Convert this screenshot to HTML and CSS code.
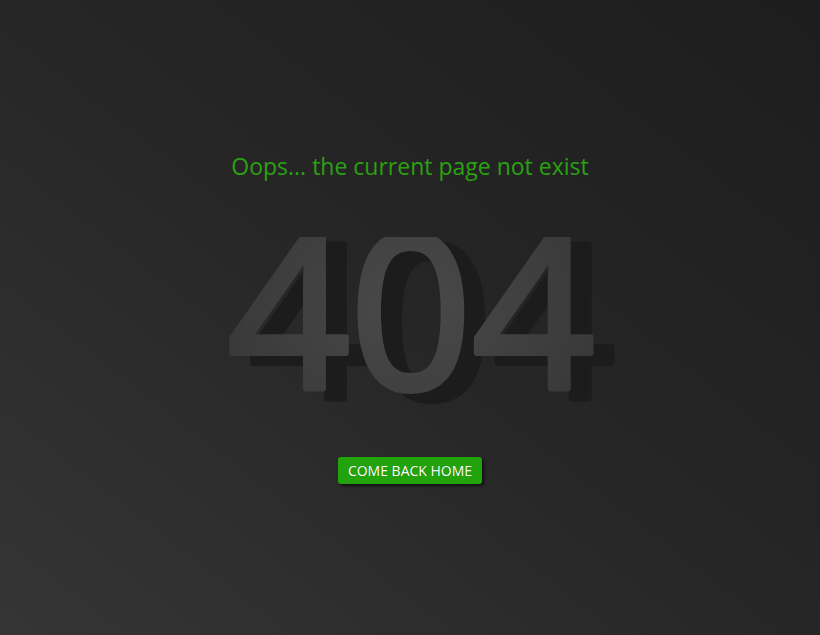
FILE: index.html
```html
<!DOCTYPE html>
<html lang="en">
<head>
<meta charset="utf-8">
<title>404</title>
<link rel="stylesheet" href="styles.css">
</head>
<body>
<main class="page">
  <h1 class="message">Oops... the current page not exist</h1>
  <div class="code">
    <svg class="code-svg" width="460" height="200" viewBox="0 0 460 200">
      <defs>
        <radialGradient id="g" cx="0.5" cy="0.5" r="0.55">
          <stop offset="0" stop-color="#4b4a4a"/>
          <stop offset="1" stop-color="#393838"/>
        </radialGradient>
      </defs>
      <text class="shadow" x="252" y="162" text-anchor="middle">404</text>
      <text class="main" x="231" y="152" text-anchor="middle" fill="url(#g)" stroke="url(#g)">404</text>
    </svg>
  </div>
  <a class="home" href="#">COME BACK HOME</a>
</main>
</body>
</html>
```
FILE: styles.css
```css
html, body {
  margin: 0;
  height: 100%;
}
body {
  background: linear-gradient(to bottom left, #1d1d1d 0%, #262626 50%, #353535 100%);
  font-family: "Open Sans", "DejaVu Sans", sans-serif;
}
.page {
  height: 635px;
  display: flex;
  flex-direction: column;
  align-items: center;
  padding-top: 150px;
  box-sizing: border-box;
}
.message {
  margin: 0;
  font-weight: 400;
  font-size: 23px;
  line-height: 32px;
  color: #2ba112;
}
.code {
  margin-top: 55px;
  height: 200px;
}
.code-svg {
  display: block;
}
.code-svg text {
  font-family: "Open Sans", sans-serif;
  font-size: 214px;
  font-weight: 400;
  stroke-width: 6;
  stroke-linejoin: round;
  stroke-linecap: round;
}
.code-svg .shadow {
  fill: #1c1c1c;
  stroke: #1c1c1c;
}
.home {
  margin-top: 20px;
  display: inline-block;
  background: #22a30c;
  color: #fff;
  text-decoration: none;
  font-size: 14px;
  font-weight: 400;
  line-height: 27px;
  padding: 0 10px;
  border-radius: 3px;
  box-shadow: 2px 2px 3px rgba(0,0,0,0.6);
  text-shadow: 0 0 1px rgba(0,0,0,0.3);
}
```
